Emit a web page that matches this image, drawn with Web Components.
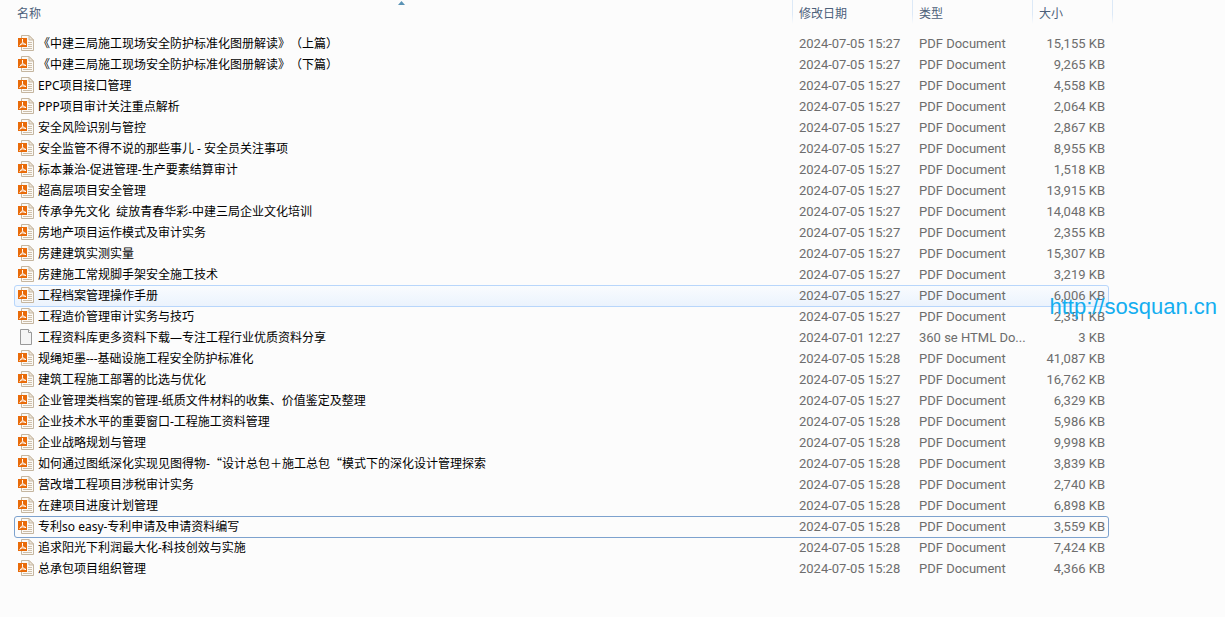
<!DOCTYPE html>
<html lang="zh-CN">
<head>
<meta charset="utf-8">
<title>文件列表</title>
<style>
body { margin: 0; background: #fcfcfc; font: 12px/20px "Noto Sans", "Noto Sans CJK SC", sans-serif; color: #000; text-spacing-trim: space-all; }
</style>
</head>
<body>
<file-browser>
  <file-table></file-table>
  <site-mark slot="mark" href="http://sosquan.cn">http://sosquan.cn</site-mark>
</file-browser>
<script>
class FileBrowser extends HTMLElement {
  constructor() {
    super();
    this.attachShadow({ mode: "open" }).innerHTML = `
      <style>
        :host { display: block; position: relative; min-height: 100vh; box-sizing: border-box; padding: 0 112px 24px 14px; }
        .mark { position: absolute; right: 8px; top: 295px; }
      </style>
      <slot></slot>
      <div class="mark"><slot name="mark"></slot></div>`;
  }
}

class SiteMark extends HTMLElement {
  constructor() {
    super();
    this.attachShadow({ mode: "open" }).innerHTML = `
      <style>
        :host { display: block; font: 22px/24px "Liberation Sans", sans-serif; }
        a { color: #14aef0; text-decoration: none; }
      </style>
      <a><slot></slot></a>`;
    this.shadowRoot.querySelector("a").href = this.getAttribute("href");
  }
}

class FileIcon extends HTMLElement {
  connectedCallback() {
    const pdf = `
      <path d="M3.500 .5h7.500l4.500 4.500v10.500h-12z" fill="#fbf9f5" stroke="#c5b6a0"/>
      <path d="M11 .5v4.500h4.500z" fill="#eee6da" stroke="#c5b6a0"/>
      <path d="M10 7.500h4M10 9.500h4M10 11.500h4M5 13.500h9" stroke="#cdbfab" fill="none"/>
      <path d="M0 3h9v9H0z" fill="#e96b09"/>
      <path d="M4.500 4v2.500c0 1.500-1 3-3 4M4.500 6.500c.5 1.500 1.500 2.500 3.500 3M2 9.500c1.500-.7 3.500-.8 6 0" stroke="#fff" fill="none"/>`;
    const page = `
      <path d="M2.500 .5h8l3 3v12h-11z" fill="#f5f5f5" stroke="#999"/>
      <path d="M10.500 .5v3h3" fill="#fff" stroke="#999"/>`;
    this.attachShadow({ mode: "open" }).innerHTML = `
      <style>:host { display: block; width: 16px; height: 16px; flex: none; white-space: normal; } svg { display: block; }</style>
      <svg width="16" height="16" viewBox="0 0 16 16" aria-hidden="true">${this.getAttribute("kind") === "pdf" ? pdf : page}</svg>`;
  }
}

const FILES = [
  ["《中建三局施工现场安全防护标准化图册解读》（上篇）", "05 15:27", "15,155"],
  ["《中建三局施工现场安全防护标准化图册解读》（下篇）", "05 15:27", "9,265"],
  ["EPC项目接口管理", "05 15:27", "4,558"],
  ["PPP项目审计关注重点解析", "05 15:27", "2,064"],
  ["安全风险识别与管控", "05 15:27", "2,867"],
  ["安全监管不得不说的那些事儿 - 安全员关注事项", "05 15:27", "8,955"],
  ["标本兼治-促进管理-生产要素结算审计", "05 15:27", "1,518"],
  ["超高层项目安全管理", "05 15:27", "13,915"],
  ["传承争先文化  绽放青春华彩-中建三局企业文化培训", "05 15:27", "14,048"],
  ["房地产项目运作模式及审计实务", "05 15:27", "2,355"],
  ["房建建筑实测实量", "05 15:27", "15,307"],
  ["房建施工常规脚手架安全施工技术", "05 15:27", "3,219"],
  ["工程档案管理操作手册", "05 15:27", "6,006", "hover"],
  ["工程造价管理审计实务与技巧", "05 15:27", "2,351"],
  ["工程资料库更多资料下载—专注工程行业优质资料分享", "01 12:27", "3"],
  ["规绳矩墨---基础设施工程安全防护标准化", "05 15:28", "41,087"],
  ["建筑工程施工部署的比选与优化", "05 15:27", "16,762"],
  ["企业管理类档案的管理-纸质文件材料的收集、价值鉴定及整理", "05 15:27", "6,329"],
  ["企业技术水平的重要窗口-工程施工资料管理", "05 15:28", "5,986"],
  ["企业战略规划与管理", "05 15:28", "9,998"],
  ["如何通过图纸深化实现见图得物-“设计总包＋施工总包“模式下的深化设计管理探索", "05 15:28", "3,839"],
  ["营改增工程项目涉税审计实务", "05 15:28", "2,740"],
  ["在建项目进度计划管理", "05 15:28", "6,898"],
  ["专利so easy-专利申请及申请资料编写", "05 15:28", "3,559", "focus"],
  ["追求阳光下利润最大化-科技创效与实施", "05 15:28", "7,424"],
  ["总承包项目组织管理", "05 15:28", "4,366"],
];

class FileTable extends HTMLElement {
  constructor() {
    super();
    const rows = FILES.map(([name, time, size, state = ""]) => {
      const kind = size === "3" ? "page" : "pdf";
      const label = name
        .replace(/“/g, "<span class=\"wide\">$&</span>")
        .replace(/[（）]/g, "<span class=\"centered\" lang=\"zh-TW\">$&</span>");
      return `<tr class="${state}">
        <td><div class="name"><file-icon kind="${kind}"></file-icon><span>${label}</span></div></td>
        <td>2024-07-${time}</td>
        <td>${kind === "pdf" ? "PDF Document" : "360 se HTML Do..."}</td>
        <td class="size">${size} KB</td></tr>`;
    }).join("");
    this.attachShadow({ mode: "open" }).innerHTML = `
      <style>
        :host { display: block; }
        table { width: 100%; table-layout: fixed; border-spacing: 0; }
        col.fixed { width: 120px; }
        col.last { width: 81px; }
        th { height: 33px; padding: 0; vertical-align: top; text-align: left; font-weight: 400; }
        th + th { background: linear-gradient(#dce9f7 60%, #fcfcfc) no-repeat 0 0 / 1px 24px; }
        th:last-child { background: linear-gradient(#dce9f7 60%, #fcfcfc) no-repeat 0 0 / 1px 24px,
                                    linear-gradient(#dce9f7 60%, #fcfcfc) no-repeat 100% 0 / 1px 24px; }
        button { display: block; position: relative; width: 100%; height: 24px; margin: 0; padding: 4px 7px 0; border: 0;
                 background: none; color: #4c607a; font: inherit; text-align: left; }
        th:first-child button { padding-left: 3px; }
        .sort { position: absolute; left: 50%; top: 1px; margin-left: -5px; }
        tr { position: relative; }
        td { height: 21px; padding: 0 7px; color: #6d6d6d; font-family: Roboto, sans-serif; font-size: 13px; white-space: pre; }
        td:first-child { padding: 0 0 0 4px; vertical-align: top; color: #000; font-family: "Noto Sans", "Noto Sans CJK SC", sans-serif; font-size: 12px; }
        .name { display: flex; align-items: flex-start; gap: 4px; height: 21px; line-height: 22px; }
        file-icon { margin-top: 2px; }
        .wide, .centered { line-height: 0; }
        .wide { font-family: "Noto Sans CJK SC", sans-serif; }
        .centered { font-family: "Noto Sans CJK TC", sans-serif; }
        .size { padding-right: 8px; text-align: right; }
        .hover { background: linear-gradient(#fafcfe, #ebf3fd) no-repeat 0 0 / calc(100% - 4px) 100%; }
        .hover td:first-child::after, .focus td:first-child::after { content: ""; position: absolute; inset: 0 4px -1px 0;
                 border: 1px solid #b8d6fb; border-radius: 3px; pointer-events: none; }
        .focus td:first-child::after { border-color: #7da2ce; }
      </style>
      <table>
        <colgroup><col><col class="fixed"><col class="fixed"><col class="last"></colgroup>
        <thead><tr>
          <th scope="col" aria-sort="ascending"><button type="button">名称<svg class="sort" width="7" height="4" viewBox="0 0 7 4" aria-hidden="true"><path d="M0 4 3.500 0 7 4z" fill="#5a93b5"/></svg></button></th>
          <th scope="col"><button type="button">修改日期</button></th>
          <th scope="col"><button type="button">类型</button></th>
          <th scope="col"><button type="button">大小</button></th>
        </tr></thead>
        <tbody>${rows}</tbody>
      </table>`;
  }
}

customElements.define("file-icon", FileIcon);
customElements.define("site-mark", SiteMark);
customElements.define("file-table", FileTable);
customElements.define("file-browser", FileBrowser);
</script>
</body>
</html>
